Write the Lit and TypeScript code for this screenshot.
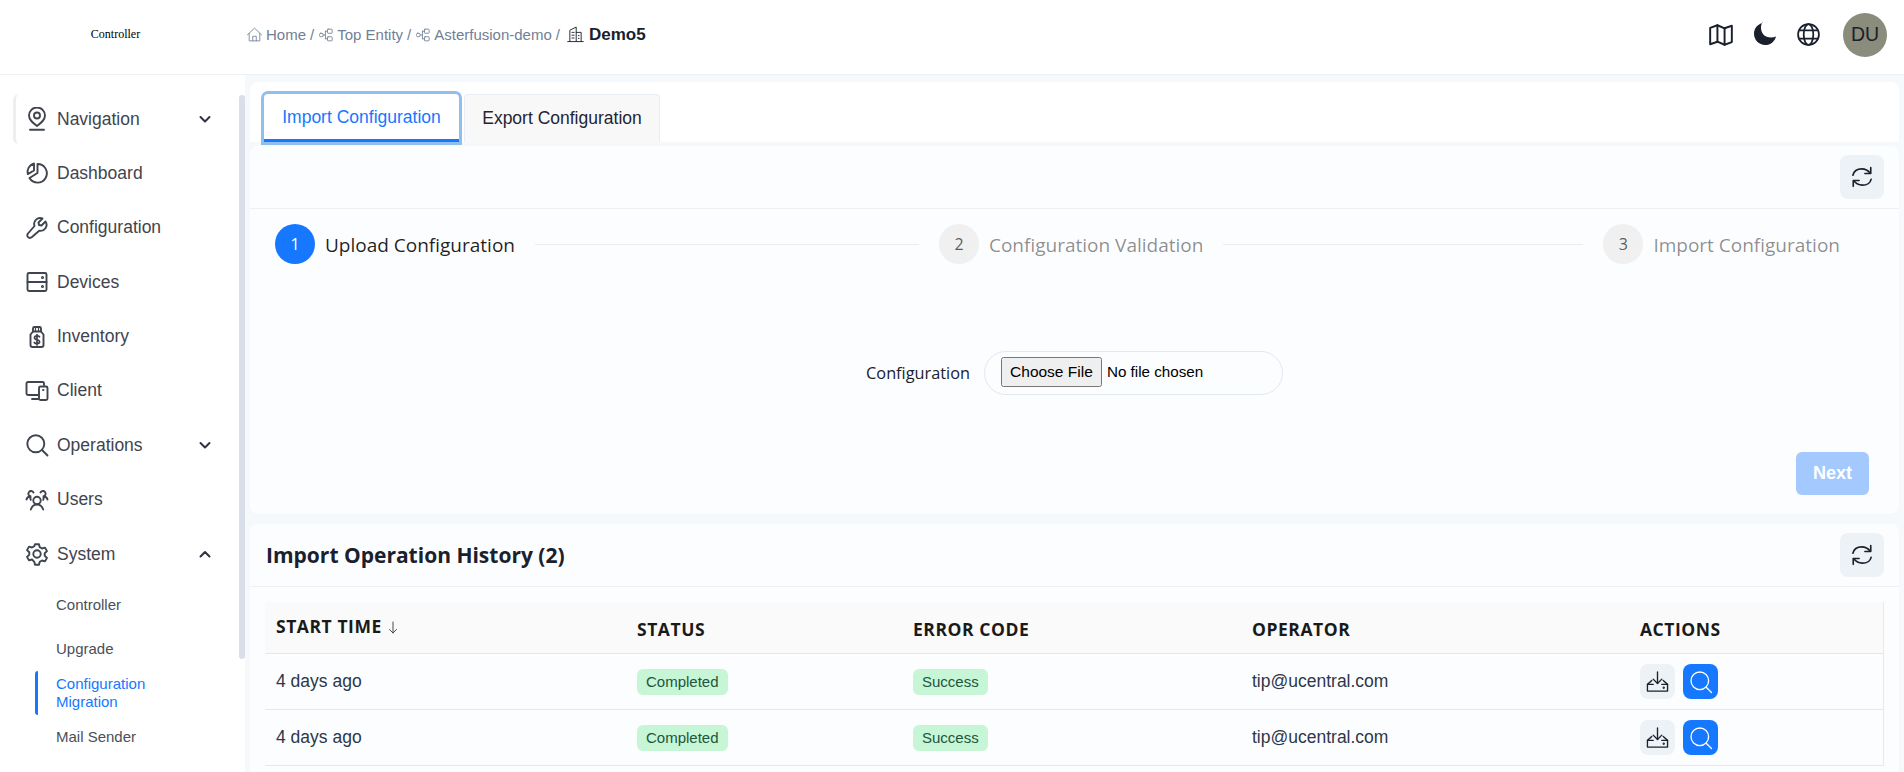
import { LitElement, html, css, svg } from "lit";
import { customElement } from "lit/decorators.js";

const icon = (body: unknown, size = 24, sw = 2) => html`<svg
  width=${size}
  height=${size}
  viewBox="0 0 24 24"
  fill="none"
  stroke="currentColor"
  stroke-width=${sw}
  stroke-linecap="round"
  stroke-linejoin="round"
>${body}</svg>`;

const icons = {
  pin: svg`<path d="M12 19c-4-3-8-6-8-10.500a8 8 0 0 1 16 0c0 4.500-4 7.500-8 10.500z"/><circle cx="12" cy="8.500" r="3"/><path d="M5 22.700h14"/>`,
  pie: svg`<path d="M12.500 3a9.300 9.300 0 1 1-8 14l8-5z"/><path d="M9 2.500v7l-6.200 3.600C1.800 8.500 4 4 9 2.500z"/>`,
  wrench: svg`<path d="M20.500 5.500l-4 4-2.500-.5-.5-2.500 4-4a6 6 0 0 0-8 7.500L3 17.500a2.600 2.600 0 0 0 3.700 3.700l7.500-6.500a6 6 0 0 0 6.300-9.200z"/>`,
  server: svg`<rect x="2.500" y="3" width="19" height="18" rx="1.500"/><path d="M2.500 12h19"/><circle cx="17.500" cy="7.500" r=".6"/><circle cx="17.500" cy="16.500" r=".6"/>`,
  jar: svg`<path d="M8 6.500V3.500A1.500 1.500 0 0 1 9.500 2h5A1.500 1.500 0 0 1 16 3.500v3"/><path d="M8 6.500h8l2.500 3V20a2 2 0 0 1-2 2h-9a2 2 0 0 1-2-2V9.500z"/><path d="M14.500 11.800c-.5-.8-1.400-1-2.500-1-1.400 0-2.500.6-2.500 1.900 0 2.800 5.100 1.400 5.100 4 0 1.300-1.200 1.900-2.600 1.900-1.200 0-2.200-.3-2.700-1.100M12 9.500v10.500" stroke-width="1.700"/><path d="M10.500 2v4.500M13.500 2v4.500" stroke-width="1.200"/>`,
  devices: svg`<path d="M19 6V4.500A1.500 1.500 0 0 0 17.500 3H3a1.500 1.500 0 0 0-1.500 1.500v10A1.500 1.500 0 0 0 3 16h10"/><path d="M7 20h6"/><rect x="14" y="7.500" width="8.500" height="13.500" rx="1.500"/><path d="M18 11h.5"/>`,
  search: svg`<circle cx="10.800" cy="10.800" r="8.500"/><path d="M17 17l5.500 5.500"/>`,
  users: svg`<circle cx="12" cy="12.500" r="3.700"/><path d="M5.800 21.500c1-3 3.300-5 6.200-5s5.200 2 6.200 5"/><path d="M1.500 11.500C2 9.500 3.500 8.500 5.500 8.300a2.700 2.700 0 1 1 3-3.800M5.500 8.300c-.2 1.500-.2 2.500.3 3.500"/><path d="M22.500 11.500c-.5-2-2-3-4-3.200a2.700 2.700 0 1 0-3-3.800M18.500 8.300c.2 1.500.2 2.500-.3 3.500"/>`,
  gear: svg`<circle cx="12" cy="12" r="3.700"/><path d="M10 2.200h4l.7 3 2.300 1.300 3-.9 2 3.500-2.300 2.100v2.600l2.300 2.100-2 3.500-3-.9-2.300 1.300-.7 3h-4l-.7-3L7 17.500l-3 .9-2-3.500 2.300-2.100v-2.600L2 8.100l2-3.500 3 .9 2.300-1.300z"/>`,
  home: svg`<path d="M2 12.500L12 3l10 9.500"/><path d="M4.500 10.500V21h15V10.500"/><path d="M9.500 21v-6.500h5V21"/>`,
  entity: svg`<rect x="1" y="9" width="6" height="6" rx="2"/><rect x="14.500" y="2" width="8" height="7" rx="1"/><rect x="14.500" y="15" width="8" height="7" rx="1"/><path d="M7 12h4M11 5.500h3.500M11 18.500h3.500M11 5.500v13"/>`,
  building: svg`<path d="M1 22h22"/><path d="M4 22V6L13 1.500V22"/><path d="M13 9h7v13"/><path d="M7 9h3M7 13h3M7 17h3M16 13.500h1M16 17.500h1"/>`,
  map: svg`<path d="M2 5.500l6.700-2.500 6.600 2.800L22 3.500v15l-6.700 2.500-6.600-2.800L2 20.500z"/><path d="M8.700 3v15.200M15.300 5.800V21"/>`,
  globe: svg`<circle cx="12" cy="12" r="10"/><ellipse cx="12" cy="12" rx="4.600" ry="10"/><path d="M3.200 8h17.600M3.200 16h17.600"/>`,
  refresh: svg`<path d="M4.200 10.500C5 7 8 5 11.800 5c3 0 5.400 1.300 7.200 3.700"/><path d="M19.500 4v5h-5"/><path d="M19.800 14c-.8 3.400-3.800 5-7.600 5-3 0-5.400-1.300-7.200-3.700"/><path d="M4.500 20v-5h5"/>`,
  install: svg`<path d="M12 2v12"/><path d="M7.500 9.500L12 14l4.500-4.500"/><path d="M7.500 15h-6v7h21v-7h-6"/><path d="M1.500 15L6 11M22.500 15L18 11"/><circle cx="18.500" cy="18.500" r=".5"/>`,
  lens: svg`<circle cx="10.800" cy="10.800" r="8.800"/><path d="M17.200 17.200l5.300 5.300"/>`,
};

const chevronDown = html`<svg class="chev" width="14" height="14" viewBox="0 0 14 14" fill="none" stroke="currentColor" stroke-width="2" stroke-linecap="round" stroke-linejoin="round"><path d="M2.500 5l4.500 4.500L11.500 5"/></svg>`;
const chevronUp = html`<svg class="chev" width="14" height="14" viewBox="0 0 14 14" fill="none" stroke="currentColor" stroke-width="2" stroke-linecap="round" stroke-linejoin="round"><path d="M2.500 9.500L7 5l4.500 4.500"/></svg>`;
const sortArrow = html`<svg class="sort" width="10" height="13" viewBox="0 0 10 13" fill="none" stroke="#4a4a4a" stroke-width="1" stroke-linecap="round" stroke-linejoin="round"><path d="M5 1v11M1.500 8.500L5 12l3.500-3.500"/></svg>`;

type NavItem = { label: string; icon: unknown; chev?: "down" | "up"; focus?: boolean };

const navItems: NavItem[] = [
  { label: "Navigation", icon: icons.pin, chev: "down", focus: true },
  { label: "Dashboard", icon: icons.pie },
  { label: "Configuration", icon: icons.wrench },
  { label: "Devices", icon: icons.server },
  { label: "Inventory", icon: icons.jar },
  { label: "Client", icon: icons.devices },
  { label: "Operations", icon: icons.search, chev: "down" },
  { label: "Users", icon: icons.users },
  { label: "System", icon: icons.gear, chev: "up" },
];

const steps = [
  { n: 1, label: "Upload Configuration", active: true, line: 384 },
  { n: 2, label: "Configuration Validation", active: false, line: 360 },
  { n: 3, label: "Import Configuration", active: false, line: 0 },
];

const columns = [
  { label: "START TIME", w: 361 },
  { label: "STATUS", w: 276 },
  { label: "ERROR CODE", w: 339 },
  { label: "OPERATOR", w: 388 },
  { label: "ACTIONS", w: 254 },
];

@customElement("app-root")
export class AppRoot extends LitElement {
  static styles = css`
    :host {
      display: block;
      height: 772px;
      overflow: hidden;
      background: #f6f9fc;
      font-family: "Liberation Sans", Arial, sans-serif;
      color: #1a202c;
    }
    .header {
      height: 75px;
      box-sizing: border-box;
      padding-bottom: 5px;
      background: #fff;
      border-bottom: 1px solid #edf0f4;
      display: flex;
      align-items: center;
    }
    .logo {
      width: 246px;
      flex: none;
      text-align: center;
      font-family: "Liberation Serif", serif;
      font-size: 12px;
      color: #000;
      padding-right: 15px;
      box-sizing: border-box;
    }
    .crumbs {
      flex: 1;
      display: flex;
      align-items: center;
      color: #718096;
      font-size: 15px;
      white-space: pre;
    }
    .crumbs svg { display: block; flex: none; }
    .crumbs .home { margin-right: 3px; }
    .crumbs .sep { margin: 0 4px 0 4px; }
    .crumbs .entity { margin: 0 4px 0 1px; }
    .crumbs .last { color: #1a202c; margin: 0 5px 0 3px; }
    .crumbs strong {
      color: #1a202c;
      font-size: 17px;
    }
    .tools {
      display: flex;
      align-items: center;
      margin-right: 17px;
      color: #1a202c;
    }
    .tools span { display: block; height: 26px; }
    .tools .map { margin-right: 19px; }
    .tools .moon { margin-right: 19px; }
    .tools .globe { margin-right: 22px; }
    .avatar {
      width: 44px;
      height: 44px;
      border-radius: 50%;
      background: #8a8c7c;
      display: flex;
      align-items: center;
      justify-content: center;
      font-size: 19.500px;
      color: #1a202c;
    }
    .body {
      display: flex;
      height: 697px;
    }
    .side {
      width: 245px;
      flex: none;
      background: #fff;
      position: relative;
      padding: 19px 0 0 13px;
      box-sizing: border-box;
      overflow: hidden;
    }
    .scroll-thumb {
      position: absolute;
      top: 20px;
      right: 0;
      width: 6px;
      height: 564px;
      border-radius: 3px;
      background: #d9dee8;
    }
    .nav {
      display: flex;
      align-items: center;
      height: 50px;
      margin-bottom: 4.400px;
      width: 206px;
      padding-left: 12px;
      box-sizing: border-box;
      color: #3f444e;
      font-size: 17.500px;
      border-radius: 6px;
    }
    .nav.focus { border-left: 3px solid #eceef2; padding-left: 9px; }
    .nav svg { flex: none; margin-right: 8px; }
    .nav span { flex: 1; }
    .nav .chev { margin-right: 7px; color: #2d3340; }
    .subs {
      display: flex;
      flex-direction: column;
      font-size: 15px;
      color: #4a4f59;
      margin-top: -1px;
    }
    .sub {
      display: flex;
      align-items: center;
      min-height: 44px;
      padding-left: 43px;
      line-height: 18px;
      box-sizing: border-box;
    }
    .sub.active {
      color: #1677ff;
      margin-left: 22px;
      padding-left: 18px;
      border-left: 3px solid #1677ff;
      border-radius: 3px;
    }
    .main {
      flex: 1;
      min-width: 0;
      padding: 7px 5px 0 5px;
      display: flex;
      flex-direction: column;
    }
    .tabbar {
      height: 60px;
      background: #fff;
      border-radius: 8px 8px 0 0;
      display: flex;
      align-items: flex-end;
      padding-left: 10px;
      gap: 2px;
      flex: none;
      position: relative;
    }
    .tab {
      height: 48px;
      box-sizing: border-box;
      display: flex;
      align-items: center;
      justify-content: center;
      font-size: 17.500px;
      width: 196px;
      background: #f8f8f9;
      border: 1px solid #e9ecf1;
      border-bottom: none;
      border-radius: 4px 4px 0 0;
      color: #1f2530;
    }
    .tab.on {
      width: 195px;
      padding-top: 2px;
      background: #fff;
      color: #1677ff;
      border: none;
      border-bottom: 3px solid #1677ff;
      box-shadow: 0 0 0 3px #90bfee;
      margin: 0 3px 0 4px;
      position: relative;
      z-index: 1;
    }
    .card {
      background: #fcfdff;
      margin-top: 4px;
      flex: none;
    }
    .card.one {
      height: 369px;
      display: flex;
      flex-direction: column;
      border-bottom: 1px solid #f2f5f9;
      box-sizing: border-box;
      border-radius: 8px;
    }
    .bar {
      height: 63px;
      box-sizing: border-box;
      border-bottom: 1px solid #eef0f4;
      display: flex;
      align-items: center;
      justify-content: flex-end;
      padding-right: 15px;
      flex: none;
    }
    .icon-btn {
      width: 44px;
      height: 44px;
      border-radius: 8px;
      background: #edf2f7;
      display: flex;
      align-items: center;
      justify-content: center;
      color: #1a202c;
      flex: none;
    }
    .stepper {
      display: flex;
      align-items: center;
      padding: 15px 59px 0 25px;
      flex: none;
    }
    .step { display: flex; align-items: center; flex: none; }
    .num {
      width: 40px;
      height: 40px;
      border-radius: 50%;
      background: #f0f0f0;
      color: rgba(0, 0, 0, 0.65);
      display: flex;
      align-items: center;
      justify-content: center;
      font-family: "Open Sans", sans-serif;
      font-size: 16px;
      margin-right: 10px;
    }
    .step.on .num { background: #1677ff; color: #fff; }
    .step .lbl {
      font-family: "Open Sans", sans-serif;
      font-size: 19px;
      padding-top: 2px;
      color: rgba(0, 0, 0, 0.45);
    }
    .step.on .lbl { color: rgba(0, 0, 0, 0.88); }
    .line {
      height: 1px;
      background: #e9edf2;
      margin: 0 20px;
    }
    .form {
      display: flex;
      align-items: center;
      justify-content: center;
      padding-top: 87px;
      flex: none;
      gap: 14px;
    }
    .form label {
      color: #1a202c;
      font-family: "Open Sans", sans-serif;
      font-size: 16.300px;
    }
    .file-wrap {
      width: 299px;
      height: 44px;
      box-sizing: border-box;
      border: 1px solid #e2e8f0;
      border-radius: 22px;
      padding: 5px 16px 0;
    }
    input[type="file"] {
      display: block;
      font-family: "Liberation Sans", Arial, sans-serif;
      font-size: 15.200px;
      width: 100%;
      color: #000;
    }
    input[type="file"]::file-selector-button {
      width: 101px;
      height: 30px;
      padding: 0;
      margin-right: 5px;
      font-size: 15.500px;
      font-family: "Liberation Sans", Arial, sans-serif;
    }
    .next-row {
      display: flex;
      justify-content: flex-end;
      padding: 57px 30px 0 0;
    }
    .next {
      width: 73px;
      height: 43px;
      border-radius: 6px;
      background: #a3c9ff;
      color: #fff;
      font-weight: 700;
      font-size: 18px;
      display: flex;
      align-items: center;
      justify-content: center;
    }
    .card.two {
      margin-top: 9px;
      border-radius: 8px 8px 0 0;
      flex: 1;
    }
    .bar.hist {
      justify-content: space-between;
      padding-left: 16px;
    }
    .hist h2 {
      margin: 0;
      font-family: "Open Sans", sans-serif;
      font-size: 21px;
      font-weight: 700;
      color: #1a202c;
    }
    .table {
      margin: 15px 15px 0;
      border-right: 1px solid #e6e9ef;
    }
    .row {
      display: flex;
      height: 56px;
      box-sizing: border-box;
      border-bottom: 1px solid #e2e8f0;
      align-items: center;
      font-size: 17.500px;
      color: #2d3748;
    }
    .row.head {
      height: 52px;
      padding-top: 3px;
      background: #fafafa;
      font-family: "Open Sans", sans-serif;
      font-size: 17.500px;
      font-weight: 700;
      color: #1a1a1a;
      letter-spacing: 0.550px;
    }
    .row > div {
      flex: none;
      padding-left: 11px;
      box-sizing: border-box;
      display: flex;
      align-items: center;
    }
    .startcol {
      display: flex;
      align-items: center;
      gap: 6px;
      position: relative;
      top: -3px;
    }
    .sort { margin-top: 3px; }
    .badge {
      display: inline-flex;
      align-items: center;
      height: 26px;
      padding: 0 9px;
      border-radius: 6px;
      background: #c6f6d5;
      color: #22543d;
      font-size: 15px;
      box-sizing: border-box;
    }
    .row > .actions { gap: 8px; }
    .act {
      width: 35px;
      height: 35px;
      border-radius: 8px;
      background: #edf2f7;
      color: #1a202c;
      display: flex;
      align-items: center;
      justify-content: center;
    }
    .act.blue { background: #1677ff; color: #fff; }
  `;

  renderRow() {
    return html`<div class="row">
      <div style="width:${columns[0].w}px">4 days ago</div>
      <div style="width:${columns[1].w}px"><span class="badge">Completed</span></div>
      <div style="width:${columns[2].w}px"><span class="badge">Success</span></div>
      <div style="width:${columns[3].w}px">tip@ucentral.com</div>
      <div style="width:${columns[4].w}px" class="actions">
        <span class="act">${icon(icons.install, 23, 1.4)}</span>
        <span class="act blue">${icon(icons.lens, 24, 1.3)}</span>
      </div>
    </div>`;
  }

  render() {
    return html`
      <div class="header">
        <div class="logo">Controller</div>
        <div class="crumbs">
          <span class="home">${icon(icons.home, 17, 1.2)}</span><span>Home</span><span class="sep">/</span>
          <span class="entity">${icon(icons.entity, 14, 1.5)}</span><span>Top Entity</span><span class="sep">/</span>
          <span class="entity">${icon(icons.entity, 14, 1.5)}</span><span>Asterfusion-demo</span><span class="sep">/</span>
          <span class="last">${icon(icons.building, 17, 1.3)}</span><strong>Demo5</strong>
        </div>
        <div class="tools">
          <span class="map">${icon(icons.map, 26, 1.8)}</span>
          <span class="moon"><svg width="24" height="24" viewBox="0 0 24 24" fill="currentColor"><path d="M9.500 1C4.700 2.200 1 6.500 1 11.800 1 18 6 23 12.200 23c5.300 0 9.700-3.700 10.800-8.600-1.500.7-3.200 1.100-5 1.100-6.200 0-10-4-10-10 0-1.900.5-3.800 1.500-5.500z"/></svg></span>
          <span class="globe">${icon(icons.globe, 25, 1.7)}</span>
          <div class="avatar">DU</div>
        </div>
      </div>
      <div class="body">
        <aside class="side">
          <div class="scroll-thumb"></div>
          ${navItems.map(
            (n) => html`<div class="nav ${n.focus ? "focus" : ""}">
              ${icon(n.icon, 24, 1.9)}<span>${n.label}</span>
              ${n.chev === "down" ? chevronDown : n.chev === "up" ? chevronUp : ""}
            </div>`,
          )}
          <div class="subs">
            <div class="sub">Controller</div>
            <div class="sub">Upgrade</div>
            <div class="sub active">Configuration<br />Migration</div>
            <div class="sub">Mail Sender</div>
          </div>
        </aside>
        <main class="main">
          <div class="tabbar">
            <div class="tab on">Import Configuration</div>
            <div class="tab">Export Configuration</div>
          </div>
          <section class="card one">
            <div class="bar"><span class="icon-btn">${icon(icons.refresh, 28, 1.4)}</span></div>
            <div class="stepper">
              ${steps.map(
                (s) => html`
                  <div class="step ${s.active ? "on" : ""}">
                    <span class="num">${s.n}</span><span class="lbl">${s.label}</span>
                  </div>
                  ${s.line ? html`<div class="line" style="flex:${s.line}"></div>` : ""}
                `,
              )}
            </div>
            <div class="form">
              <label>Configuration</label>
              <div class="file-wrap"><input type="file" /></div>
            </div>
            <div class="next-row"><div class="next">Next</div></div>
          </section>
          <section class="card two">
            <div class="bar hist">
              <h2>Import Operation History (2)</h2>
              <span class="icon-btn">${icon(icons.refresh, 28, 1.4)}</span>
            </div>
            <div class="table">
              <div class="row head">
                ${columns.map(
                  (c, i) => html`<div style="width:${c.w}px">
                    ${i === 0 ? html`<span class="startcol">${c.label}${sortArrow}</span>` : c.label}
                  </div>`,
                )}
              </div>
              ${this.renderRow()} ${this.renderRow()}
            </div>
          </section>
        </main>
      </div>
    `;
  }
}
